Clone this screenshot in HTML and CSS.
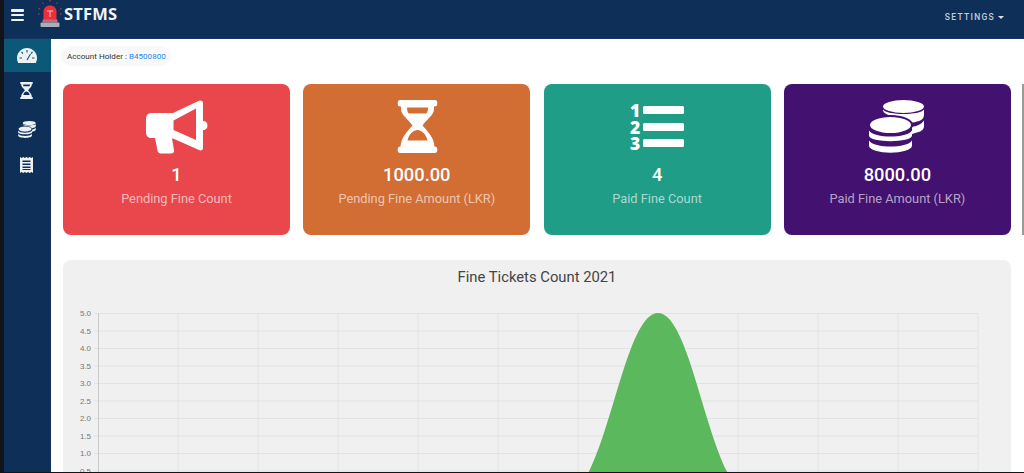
FILE: index.html
```html
<!DOCTYPE html>
<html lang="en">
<head>
<meta charset="utf-8">
<title>STFMS</title>
<link rel="stylesheet" href="styles.css">
</head>
<body>
<svg class="defs" width="0" height="0" aria-hidden="true">
  <symbol id="hourglass" viewBox="11.5 0 40 53">
    <rect x="11.5" y="0" width="40" height="6.5" rx="3"/>
    <rect x="11.5" y="46.5" width="40" height="6.5" rx="3"/>
    <path fill-rule="evenodd" d="M15 5H48V9C48 15 41 19 36.500 25.500C41 31 48.500 37 48.500 48H14.500C14.500 37 22 31 26.500 25.500C22 19 15 15 15 9ZM21 7.500C21 11 22 13.500 23 13.500H40C41 13.500 42 11 42 7.500ZM21.500 40.500H41.500C40 33.500 35 30 31.500 30C28 30 23 33.500 21.500 40.500Z"/>
  </symbol>
  <symbol id="coins" viewBox="3 0 55 53">
    <ellipse cx="37.500" cy="6.500" rx="20.500" ry="6.500"/>
    <path d="M17 9.500C21 15.500 54 15.500 58 9.500V15C58 21 50 22 44 23C41 19 32 16 24 15.500C20 14 17 13 17 9.500Z"/>
    <path d="M46 27C50 26 55 25 58 20.500V26C58 31 53 32 46 34Z"/>
    <ellipse class="coin-top" cx="24.500" cy="25" rx="21.500" ry="9"/>
    <path d="M3 30.500C8 38.500 41 38.500 46 30.500V35.500C46 43 3 43 3 35.500Z"/>
    <path d="M3 40.500C8 48.500 41 48.500 46 40.500V45.500C46 55 3 55 3 45.500Z"/>
  </symbol>
</svg>

<header class="topbar">
  <button class="burger" aria-label="Menu"><span></span><span></span><span></span></button>
  <svg class="siren" viewBox="0 0 24 28" aria-hidden="true">
    <path class="siren-ray" d="M12 0V2.500M4.500 2.500L6 4.500M19.500 2.500L18 4.500M0.500 8.500L3 9.500M23.500 8.500L21 9.500M0 14H2M22 14H24"/>
    <path class="siren-dome" d="M5.500 20.500V12C5.500 8 8 5.500 12 5.500C16 5.500 18.500 8 18.500 12V20.500Z"/>
    <path class="siren-t" d="M9 11H15M12 11V17"/>
    <rect class="siren-band" x="4.500" y="19.500" width="15" height="3"/>
    <rect class="siren-base" x="2.500" y="22.500" width="19" height="4.500" rx="1"/>
  </svg>
  <span class="brand">STFMS</span>
  <a class="settings">SETTINGS<i class="caret"></i></a>
</header>

<div class="layout">
  <nav class="sidenav">
    <a class="nav-item active">
      <svg class="nav-gauge" viewBox="0 0 20 15" aria-hidden="true">
        <path d="M10 0C4.500 0 0 4.500 0 10C0 11.800 .5 13.500 1.200 15H18.800C19.500 13.500 20 11.800 20 10C20 4.500 15.500 0 10 0Z"/>
        <path class="gauge-mark" d="M10 2V4.500M4.500 4L6 5.500M15.500 4L14 5.500M2.500 10H5M17.500 10H15M10 12L13.500 6"/>
      </svg>
    </a>
    <a class="nav-item"><svg class="nav-hourglass"><use href="#hourglass"/></svg></a>
    <a class="nav-item"><svg class="nav-coins"><use href="#coins"/></svg></a>
    <a class="nav-item">
      <svg class="nav-receipt" viewBox="0 0 13 16" aria-hidden="true">
        <path fill-rule="evenodd" d="M0 0L1.600 1L3.200 0L4.900 1L6.500 0L8.100 1L9.800 0L11.400 1L13 0V16L11.400 15L9.800 16L8.100 15L6.500 16L4.900 15L3.200 16L1.600 15L0 16ZM2.500 3.500V5H10.500V3.500ZM2.500 6.500V8H10.500V6.500ZM2.500 9.500V11H10.500V9.500ZM2.500 12V13H10.500V12Z"/>
      </svg>
    </a>
  </nav>

  <main class="content">
    <div class="holder">Account Holder : <span class="holder-id">B4500800</span></div>

    <section class="cards">
      <article class="card card-red">
        <svg class="card-icon" viewBox="0 0 62 54" aria-hidden="true">
          <path fill-rule="evenodd" d="M27 13L53 0.800C55 0 57 1 57 3V21C60 21 61.500 23 61.500 25.500C61.500 28 60 30 57 30V48C57 50 55 51 53 50L27 38.500H26L28 50C28.500 52.500 27 53.500 25 53.500H15C13 53.500 12 52.500 11.500 50.500L9 38H6C2 38 0 36 0 32V19C0 15 2 13 6 13ZM27.500 20.500V30L50 40V8.500Z"/>
        </svg>
        <div class="card-value">1</div>
        <div class="card-label">Pending Fine Count</div>
      </article>
      <article class="card card-orange">
        <svg class="card-icon"><use href="#hourglass" x="11.500" width="40" height="53"/></svg>
        <div class="card-value">1000.00</div>
        <div class="card-label">Pending Fine Amount (LKR)</div>
      </article>
      <article class="card card-teal">
        <div class="card-icon list-icon" aria-hidden="true">
          <div class="list-row"><span class="list-num">1</span><span class="list-bar"></span></div>
          <div class="list-row"><span class="list-num">2</span><span class="list-bar"></span></div>
          <div class="list-row"><span class="list-num">3</span><span class="list-bar"></span></div>
        </div>
        <div class="card-value">4</div>
        <div class="card-label">Paid Fine Count</div>
      </article>
      <article class="card card-purple">
        <svg class="card-icon"><use href="#coins" x="3" width="55" height="53"/></svg>
        <div class="card-value">8000.00</div>
        <div class="card-label">Paid Fine Amount (LKR)</div>
      </article>
      <div class="card-peek"></div>
    </section>

    <section class="chart-card">
      <h2 class="chart-title">Fine Tickets Count 2021</h2>
      <svg class="chart" viewBox="63 294 948 200" aria-label="Fine tickets chart">
        <path class="grid" d="M94 313.500H978M94 331H978M94 348.500H978M94 366H978M94 383.500H978M94 401H978M94 418.500H978M94 436H978M94 453.500H978M94 471H978M178 313V490M258 313V490M338 313V490M418 313V490M498 313V490M578 313V490M658 313V490M738 313V490M818 313V490M898 313V490M978 313V490"/>
        <path class="axis" d="M98.500 313V490"/>
        <path class="area" d="M578 488.500C610 453.500 626 313 658 313C690 313 706 453.500 738 488.500Z"/>
        <g class="ticks">
          <text x="91" y="316">5.0</text>
          <text x="91" y="333.500">4.5</text>
          <text x="91" y="351">4.0</text>
          <text x="91" y="368.500">3.5</text>
          <text x="91" y="386">3.0</text>
          <text x="91" y="403.500">2.5</text>
          <text x="91" y="421">2.0</text>
          <text x="91" y="438.500">1.5</text>
          <text x="91" y="456">1.0</text>
          <text x="91" y="473.500">0.5</text>
        </g>
      </svg>
    </section>
  </main>
</div>
</body>
</html>
```
FILE: styles.css
```css
* { box-sizing: border-box; }

html, body {
  margin: 0;
  height: 473px;
  overflow: hidden;
}

body {
  padding: 0 0 1px 4px;
  background: #11151b;
  font-family: Roboto, "Liberation Sans", sans-serif;
  display: flex;
  flex-direction: column;
}

.defs { position: absolute; }

.topbar {
  flex: none;
  height: 39px;
  background: #0e2f57;
  display: flex;
  align-items: flex-start;
  color: #fff;
  border-bottom: 1px solid #12365f;
}

.burger {
  width: 13px;
  height: 12px;
  margin: 9px 0 0 7px;
  padding: 0;
  border: 0;
  background: none;
  display: flex;
  flex-direction: column;
  justify-content: space-between;
}

.burger span {
  display: block;
  height: 2.500px;
  background: #f2f4f7;
  border-radius: 1px;
}

.siren {
  width: 24px;
  height: 28px;
  margin: 0 0 0 14px;
}

.siren-ray { stroke: #d9404a; stroke-width: 1; stroke-dasharray: 1.500 1; fill: none; }
.siren-dome { fill: #ee2e3a; }
.siren-t { stroke: #f6c9c9; stroke-width: 1; fill: none; }
.siren-band { fill: #c26a7c; }
.siren-base { fill: #a9adb8; }

.brand {
  margin: 2px 0 0 2px;
  font-family: "Open Sans", sans-serif;
  font-weight: 700;
  font-size: 16.500px;
  line-height: 23px;
  letter-spacing: .2px;
  color: #f1f4f7;
}

.settings {
  margin: 11px 20px 0 auto;
  font-family: Roboto, sans-serif;
  font-weight: 500;
  font-size: 8.500px;
  line-height: 12px;
  letter-spacing: 1.300px;
  color: #c3cbd7;
  display: flex;
  align-items: center;
}

.caret {
  margin-left: 3px;
  border: 3px solid transparent;
  border-top: 3.500px solid #dbe0e7;
  border-bottom: 0;
}

.layout {
  flex: 1;
  min-height: 0;
  display: flex;
}

.sidenav {
  flex: none;
  width: 47px;
  background: #0e2f57;
  display: flex;
  flex-direction: column;
}

.nav-item {
  height: 37px;
  padding-right: 2px;
  display: flex;
  align-items: center;
  justify-content: center;
}

.nav-item.active {
  height: 33px;
  background: #0b5878;
}

.nav-item svg { fill: #eef1f4; --halo: #0e2f57; }
.nav-gauge { width: 20px; height: 15px; }
.nav-hourglass { width: 13px; height: 17px; }
.nav-coins { width: 18px; height: 17px; margin-top: 3px; }
.nav-receipt { width: 13px; height: 16px; }

.gauge-mark { fill: none; stroke: #0b5878; stroke-width: 1.100; }

.content {
  flex: 1;
  min-width: 0;
  background: #fff;
  padding: 7px 0 0 10px;
  overflow: hidden;
}

.holder {
  width: 110px;
  height: 20px;
  padding-left: 6px;
  background: #f8f8f9;
  border-radius: 10px;
  font-size: 8.100px;
  line-height: 20px;
  color: #333;
  white-space: nowrap;
}

.holder-id { color: #1e88e5; }

.cards {
  margin: 18px 0 0 2px;
  display: flex;
  gap: 13.300px;
  height: 151px;
}

.card {
  flex: none;
  width: 227px;
  height: 151px;
  border-radius: 8px;
  padding-top: 16px;
  display: flex;
  flex-direction: column;
  align-items: center;
  color: #fff;
}

.card-red { background: #e9474c; --halo: #e9474c; }
.card-orange { background: #d26d33; --halo: #d26d33; }
.card-teal { background: #1f9d87; --halo: #1f9d87; }
.card-purple { background: #43116f; --halo: #43116f; }

.card-peek {
  flex: none;
  width: 2px;
  margin-left: -2.500px;
  background: #9a9a9a;
}

.card-icon {
  display: block;
  flex: none;
  width: 62px;
  height: 54px;
  fill: #fff;
}

.coin-top {
  stroke: var(--halo);
  stroke-width: 2;
}

.list-icon {
  padding: 2px 0 0 4px;
}

.list-row {
  height: 16.500px;
  display: flex;
  align-items: center;
  gap: 3px;
}

.list-num {
  width: 10px;
  font-family: "Open Sans", sans-serif;
  font-weight: 800;
  font-size: 17.500px;
  line-height: 16.500px;
}

.list-bar {
  width: 41px;
  height: 8px;
  background: #fff;
  border-radius: 1.500px;
}

.card-value {
  margin-top: 10px;
  font-weight: 500;
  font-size: 18.300px;
  line-height: 22px;
}

.card-label {
  margin-top: 5px;
  font-size: 12.800px;
  line-height: 16px;
  color: rgba(255, 255, 255, .62);
}

.chart-card {
  margin: 25px 0 0 2px;
  width: 948px;
  height: 240px;
  background: #f0f0f0;
  border-radius: 8px;
}

.chart-title {
  margin: 0;
  height: 34px;
  font-weight: 400;
  font-size: 14.800px;
  line-height: 34px;
  text-align: center;
  color: #444;
}

.chart {
  display: block;
  width: 948px;
  height: 200px;
}

.grid { fill: none; stroke: #e2e2e2; stroke-width: 1; }
.axis { fill: none; stroke: #cacaca; stroke-width: 1; }
.area { fill: #5cb85c; }

.ticks {
  font-family: "Liberation Sans", sans-serif;
  font-size: 8px;
  fill: #777;
  text-anchor: end;
}
```
